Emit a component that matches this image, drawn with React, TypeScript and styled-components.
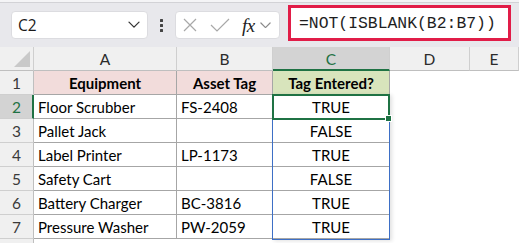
import React from "react";
import styled, { createGlobalStyle } from "styled-components";

const Global = createGlobalStyle`
  html, body { margin: 0; padding: 0; background: #ffffff; }
  body { width: 519px; height: 243px; overflow: hidden; font-family: Lato, "Open Sans", sans-serif; }
`;

const Page = styled.div`
  width: 519px;
  height: 243px;
  overflow: hidden;
  display: flex;
  flex-direction: column;
  background: #fff;
`;

const TopStrip = styled.div`
  height: 2px;
  background: #f4f4f6;
  border-bottom: 1px solid #d2d2d6;
  flex: none;
`;

const Toolbar = styled.div`
  height: 44px;
  flex: none;
  background: #e8e8ec;
  display: flex;
  align-items: flex-start;
  padding-left: 11px;
  box-sizing: border-box;
`;

const NameBox = styled.div`
  margin-top: 8px;
  width: 137px;
  height: 28px;
  box-sizing: border-box;
  background: #fff;
  border: 1px solid #dcdce0;
  border-radius: 4px;
  display: flex;
  align-items: center;
  justify-content: space-between;
  padding: 0 7px 0 6px;
  font-family: "Open Sans", Lato, sans-serif;
  font-size: 15.5px;
  color: #1a1a1a;
`;

const Dots = styled.div`
  width: 27px;
  height: 44px;
  display: flex;
  flex-direction: column;
  align-items: center;
  justify-content: center;
  gap: 2px;
  & > span {
    width: 3px;
    height: 3px;
    background: #444;
    border-radius: 0.5px;
  }
`;

const FxBox = styled.div`
  margin-top: 8px;
  width: 105px;
  height: 28px;
  box-sizing: border-box;
  background: #fff;
  border: 1px solid #dcdce0;
  border-radius: 4px;
  display: flex;
  align-items: center;
  padding: 0 0 0 7px;
`;

const FxText = styled.span`
  font-family: "Liberation Serif", "DejaVu Serif", serif;
  font-style: italic;
  font-size: 19px;
  color: #222;
  margin-left: 12px;
  margin-right: 5px;
  letter-spacing: -0.5px;
  line-height: 1;
`;

const FormulaBar = styled.div`
  margin-top: 2px;
  margin-left: 8px;
  width: 223px;
  height: 36px;
  box-sizing: border-box;
  background: #fff;
  border: 3px solid #e11d48;
  display: flex;
  align-items: center;
  padding-left: 8px;
  font-family: "Liberation Mono", "DejaVu Sans Mono", monospace;
  font-size: 16.4px;
  color: #1e1e1e;
  white-space: nowrap;
`;

const Sheet = styled.div`
  position: relative;
  flex: 1;
  display: flex;
  flex-direction: column;
  font-family: Lato, "Open Sans", sans-serif;
  font-size: 15px;
  color: #000;
`;

const Row = styled.div<{ $h: number }>`
  display: flex;
  height: ${(p) => p.$h}px;
  flex: none;
`;

const widths = [34, 143, 96, 117, 80, 49];

const ColHead = styled.div<{ $w: number; $sel?: boolean }>`
  width: ${(p) => p.$w}px;
  flex: none;
  box-sizing: border-box;
  background: ${(p) => (p.$sel ? "#d3d3d3" : "#f0f0f0")};
  border-right: 1px solid #cfcfcf;
  border-bottom: ${(p) => (p.$sel ? "2px solid #1f7244" : "1px solid #bfbfbf")};
  color: ${(p) => (p.$sel ? "#1f7244" : "#2b2b2b")};
  display: flex;
  align-items: center;
  justify-content: center;
  padding-top: ${(p) => (p.$sel ? "1px" : "0")};
  font-size: 15.5px;
`;

const Corner = styled.div`
  width: 34px;
  flex: none;
  box-sizing: border-box;
  background: #f0f0f0;
  border-right: 1px solid #cfcfcf;
  border-bottom: 1px solid #bfbfbf;
  position: relative;
  &::after {
    content: "";
    position: absolute;
    right: 3px;
    bottom: 3px;
    width: 0;
    height: 0;
    border-left: 16px solid transparent;
    border-bottom: 16px solid #c9c9c9;
  }
`;

const RowHead = styled.div<{ $sel?: boolean }>`
  width: 34px;
  flex: none;
  box-sizing: border-box;
  background: ${(p) => (p.$sel ? "#d3d3d3" : "#f0f0f0")};
  border-right: ${(p) => (p.$sel ? "2px solid #1f7244" : "1px solid #bfbfbf")};
  border-bottom: 1px solid #cfcfcf;
  color: ${(p) => (p.$sel ? "#1f7244" : "#3a3a3a")};
  display: flex;
  align-items: center;
  justify-content: center;
  padding-left: ${(p) => (p.$sel ? "1px" : "0")};
  font-size: 15.5px;
`;

type Fill = "pink" | "green" | "none";

const Cell = styled.div<{ $w: number; $fill?: Fill; $align?: string; $bold?: boolean; $grid?: boolean }>`
  width: ${(p) => p.$w}px;
  flex: none;
  box-sizing: border-box;
  background: ${(p) => (p.$fill === "pink" ? "#f2dcdb" : p.$fill === "green" ? "#d8e4bc" : "#fff")};
  border-right: 1px solid ${(p) => (p.$grid ? "#a6a6a6" : "transparent")};
  border-bottom: 1px solid ${(p) => (p.$grid ? "#a6a6a6" : "transparent")};
  display: flex;
  align-items: center;
  justify-content: ${(p) => (p.$align === "center" ? "center" : "flex-start")};
  padding-left: ${(p) => (p.$align === "center" ? "0" : "4px")};
  font-weight: ${(p) => (p.$bold ? 700 : 400)};
  white-space: nowrap;
  overflow: hidden;
`;

const Spill = styled.div`
  position: absolute;
  left: 272px;
  top: 47px;
  width: 118px;
  height: 146px;
  box-sizing: border-box;
  border: 1px solid #3d6fc6;
  box-shadow: 2px 1px 4px rgba(0, 0, 0, 0.12);
  pointer-events: none;
`;

const Selection = styled.div`
  position: absolute;
  left: 272px;
  top: 47px;
  width: 118px;
  height: 26px;
  box-sizing: border-box;
  border: 2px solid #1f7244;
  pointer-events: none;
  &::after {
    content: "";
    position: absolute;
    right: -4px;
    bottom: -4px;
    width: 5px;
    height: 5px;
    background: #1f7244;
    border: 1px solid #fff;
  }
`;

const data: [string, string, string][] = [
  ["Floor Scrubber", "FS-2408", "TRUE"],
  ["Pallet Jack", "", "FALSE"],
  ["Label Printer", "LP-1173", "TRUE"],
  ["Safety Cart", "", "FALSE"],
  ["Battery Charger", "BC-3816", "TRUE"],
  ["Pressure Washer", "PW-2059", "TRUE"],
];

const Chevron = ({ color = "#333", size = 12 }: { color?: string; size?: number }) => (
  <svg width={size} height={size * 0.6} viewBox="0 0 12 7" fill="none">
    <path d="M1 1l5 5 5-5" stroke={color} strokeWidth="1.3" strokeLinecap="round" strokeLinejoin="round" />
  </svg>
);

export default function App() {
  return (
    <>
      <Global />
      <Page>
        <TopStrip />
        <Toolbar>
          <NameBox>
            <span>C2</span>
            <Chevron />
          </NameBox>
          <Dots>
            <span />
            <span />
            <span />
          </Dots>
          <FxBox>
            <svg width="14" height="14" viewBox="0 0 14 14" fill="none">
              <path d="M1 1l12 12M13 1L1 13" stroke="#a8a8a8" strokeWidth="1.2" />
            </svg>
            <svg width="20" height="14" viewBox="0 0 20 14" fill="none" style={{ marginLeft: 13 }}>
              <path d="M1 7l6 6L19 1" stroke="#a8a8a8" strokeWidth="1.2" />
            </svg>
            <FxText>fx</FxText>
            <Chevron color="#8a8a8a" size={11} />
          </FxBox>
          <FormulaBar>=NOT(ISBLANK(B2:B7))</FormulaBar>
        </Toolbar>
        <Sheet>
          <Row $h={24}>
            <Corner />
            <ColHead $w={widths[1]}>A</ColHead>
            <ColHead $w={widths[2]}>B</ColHead>
            <ColHead $w={widths[3]} $sel>C</ColHead>
            <ColHead $w={widths[4]}>D</ColHead>
            <ColHead $w={widths[5]}>E</ColHead>
          </Row>
          <Row $h={24}>
            <RowHead>1</RowHead>
            <Cell $w={widths[1]} $fill="pink" $align="center" $bold $grid>Equipment</Cell>
            <Cell $w={widths[2]} $fill="pink" $align="center" $bold $grid>Asset Tag</Cell>
            <Cell $w={widths[3]} $fill="green" $align="center" $bold $grid>Tag Entered?</Cell>
            <Cell $w={widths[4]} />
            <Cell $w={widths[5]} />
          </Row>
          {data.map((r, i) => (
            <Row $h={24} key={i}>
              <RowHead $sel={i === 0}>{i + 2}</RowHead>
              <Cell $w={widths[1]} $grid>{r[0]}</Cell>
              <Cell $w={widths[2]} $grid>{r[1]}</Cell>
              <Cell $w={widths[3]} $align="center" $grid>{r[2]}</Cell>
              <Cell $w={widths[4]} />
              <Cell $w={widths[5]} />
            </Row>
          ))}
          <Row $h={10}>
            <RowHead />
          </Row>
          <Spill />
          <Selection />
        </Sheet>
      </Page>
    </>
  );
}
